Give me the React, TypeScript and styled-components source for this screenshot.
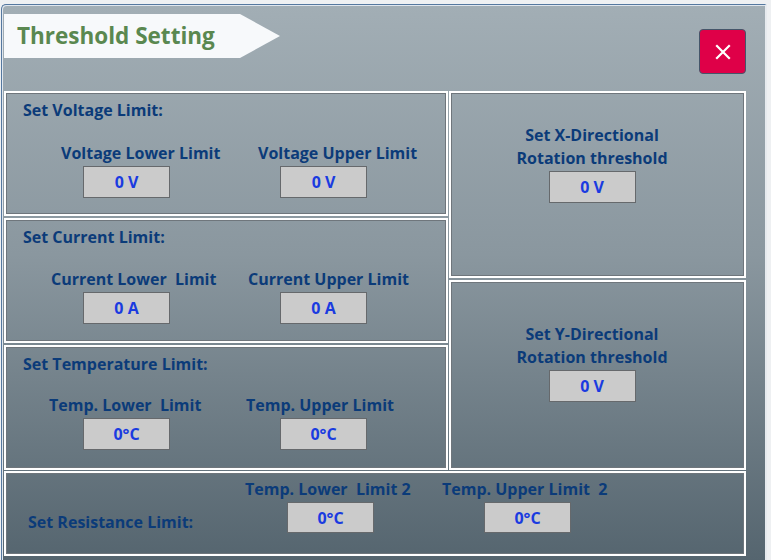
import styled, { createGlobalStyle } from "styled-components";

const GlobalStyle = createGlobalStyle`
  html, body {
    margin: 0;
    padding: 0;
    background: #eef0f2;
    overflow: hidden;
  }
  body {
    font-family: "Open Sans", "Noto Sans", sans-serif;
  }
`;

const Window = styled.div`
  width: 766px;
  height: 556px;
  margin: 4px 0 0 1px;
  box-sizing: border-box;
  border-left: 1px solid #55789f;
  border-top: 1px solid #55789f;
  border-right: 2px solid #e6eaee;
  border-top-left-radius: 5px;
  background: linear-gradient(180deg, #a2aeb5 0%, #8a979f 45%, #55656f 100%);
  box-shadow: inset 1px 1px 0 #dfe6ee;
`;

const Header = styled.div`
  height: 86px;
  display: flex;
  align-items: flex-start;
  padding-left: 2px;
`;

const Banner = styled.div`
  margin-top: 9px;
  width: 276px;
  height: 44px;
  background: #f7f9fb;
  clip-path: polygon(0 0, 236px 0, 100% 50%, 236px 100%, 0 100%);
  display: flex;
  align-items: center;
  padding: 0 0 2px 13px;
  box-sizing: border-box;
`;

const BannerText = styled.h1`
  margin: 0;
  font-family: "Open Sans", sans-serif;
  font-weight: 700;
  font-size: 22.5px;
  color: #5a8850;
`;

const CloseButton = styled.button`
  margin: 24px 19px 0 auto;
  width: 47px;
  height: 45px;
  padding: 0;
  border: 1px solid #45566a;
  border-radius: 4px;
  background: #df0048;
  display: flex;
  align-items: center;
  justify-content: center;
  cursor: pointer;
`;

const Body = styled.div`
  padding: 0 19px 0 2px;
  display: flex;
  flex-direction: column;
  gap: 1px;
`;

const Columns = styled.div`
  display: flex;
  gap: 1px;
`;

const Column = styled.div<{ $width: number }>`
  width: ${(p) => p.$width}px;
  display: flex;
  flex-direction: column;
  gap: 2px;
`;

const Panel = styled.section<{ $height: number }>`
  height: ${(p) => p.$height}px;
  box-sizing: border-box;
  border: 2px solid #ffffff;
  box-shadow: inset 0 0 0 1px #6f767c;
  overflow: hidden;
`;

const LimitPanel = styled(Panel)`
  padding: 8px 0 0 17px;
`;

const SectionTitle = styled.div`
  font-weight: 700;
  font-size: 16px;
  line-height: 18px;
  color: #0b3b79;
  white-space: nowrap;
`;

const FieldRow = styled.div<{ $top: number; $left: number }>`
  display: flex;
  flex-shrink: 0;
  margin-top: ${(p) => p.$top}px;
  margin-left: ${(p) => p.$left}px;
`;

const Field = styled.div`
  width: 197px;
  flex-shrink: 0;
  display: flex;
  flex-direction: column;
  align-items: flex-start;
`;

const FieldLabel = styled.div<{ $shift: number }>`
  margin-left: ${(p) => p.$shift}px;
  font-weight: 700;
  font-size: 16px;
  line-height: 18px;
  color: #0b3b79;
  white-space: pre;
`;

const ValueBox = styled.div<{ $h?: number }>`
  margin-top: 4px;
  width: 87px;
  height: ${(p) => p.$h ?? 32}px;
  box-sizing: border-box;
  border: 1px solid #66696c;
  background: #cbcbcb;
  display: flex;
  align-items: center;
  justify-content: center;
  font-weight: 700;
  font-size: 16px;
  color: #1a3be0;
`;

const RotationPanel = styled(Panel)<{ $pad: number }>`
  padding: ${(p) => p.$pad}px 11px 0 0;
  display: flex;
  flex-direction: column;
  align-items: center;
`;

const RotationTitle = styled.div`
  font-weight: 700;
  font-size: 16px;
  line-height: 23px;
  color: #0b3b79;
  text-align: center;
`;

const RotationBox = styled(ValueBox)`
  margin-top: 1px;
`;

const BottomPanel = styled(Panel)`
  display: flex;
  align-items: flex-start;
  padding: 7px 0 0 22px;
`;

const BottomTitle = styled(SectionTitle)`
  width: 259px;
  flex-shrink: 0;
  margin-top: 33px;
`;

function CloseIcon() {
  return (
    <svg width="16" height="16" viewBox="0 0 16 16">
      <path d="M2 2 L14 14 M14 2 L2 14" stroke="#ffffff" strokeWidth="2.2" strokeLinecap="square" />
    </svg>
  );
}

const limits = [
  { title: "Set Voltage Limit:", lower: "Voltage Lower Limit", upper: "Voltage Upper Limit", value: "0 V", shift: -22, top: 25 },
  { title: "Set Current Limit:", lower: "Current Lower  Limit", upper: "Current Upper Limit", value: "0 A", shift: -32, top: 24 },
  { title: "Set Temperature Limit:", lower: "Temp. Lower  Limit", upper: "Temp. Upper Limit", value: "0°C", shift: -34, top: 23 },
];

export default function App() {
  return (
    <>
      <GlobalStyle />
      <Window>
        <Header>
          <Banner>
            <BannerText>Threshold Setting</BannerText>
          </Banner>
          <CloseButton aria-label="close">
            <CloseIcon />
          </CloseButton>
        </Header>
        <Body>
          <Columns>
            <Column $width={444}>
              {limits.map((l) => (
                <LimitPanel key={l.title} $height={125}>
                  <SectionTitle>{l.title}</SectionTitle>
                  <FieldRow $top={l.top} $left={60}>
                    <Field>
                      <FieldLabel $shift={l.shift}>{l.lower}</FieldLabel>
                      <ValueBox>{l.value}</ValueBox>
                    </Field>
                    <Field>
                      <FieldLabel $shift={l.shift}>{l.upper}</FieldLabel>
                      <ValueBox>{l.value}</ValueBox>
                    </Field>
                  </FieldRow>
                </LimitPanel>
              ))}
            </Column>
            <Column $width={297}>
              <RotationPanel $height={187} $pad={31}>
                <RotationTitle>
                  Set X-Directional
                  <br />
                  Rotation threshold
                </RotationTitle>
                <RotationBox>0 V</RotationBox>
              </RotationPanel>
              <RotationPanel $height={190} $pad={41}>
                <RotationTitle>
                  Set Y-Directional
                  <br />
                  Rotation threshold
                </RotationTitle>
                <RotationBox>0 V</RotationBox>
              </RotationPanel>
            </Column>
          </Columns>
          <BottomPanel $height={85}>
            <BottomTitle>Set Resistance Limit:</BottomTitle>
            <FieldRow $top={0} $left={0}>
              <Field>
                <FieldLabel $shift={-42}>Temp. Lower  Limit 2</FieldLabel>
                <ValueBox $h={31}>0°C</ValueBox>
              </Field>
              <Field>
                <FieldLabel $shift={-42}>Temp. Upper Limit  2</FieldLabel>
                <ValueBox $h={31}>0°C</ValueBox>
              </Field>
            </FieldRow>
          </BottomPanel>
        </Body>
      </Window>
    </>
  );
}
